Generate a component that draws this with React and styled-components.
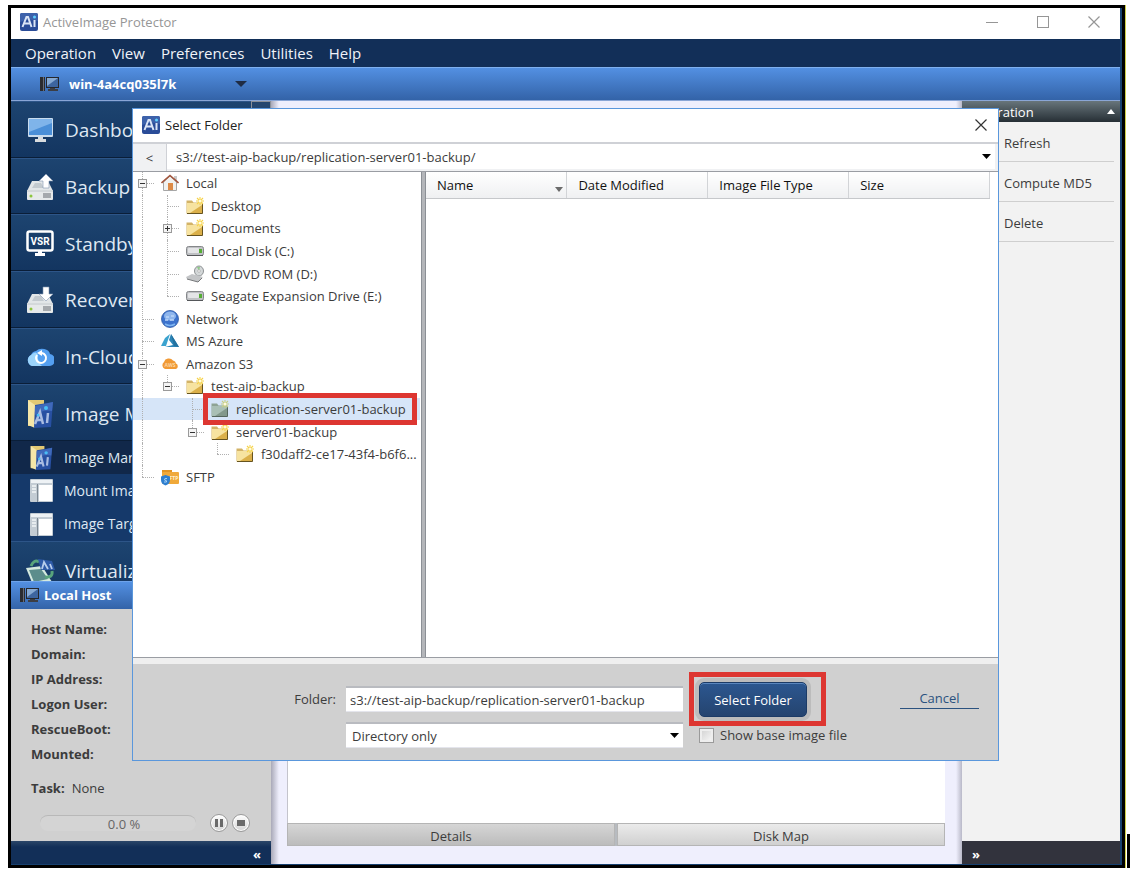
import React from 'react';
import styled, { createGlobalStyle, css } from 'styled-components';

const Color = {
  text: '#3c3c3c',
  navy: '#122f58',
  lavender: '#efeffd',
  grey: '#d0d0d0',
  red: '#dd3631',
  line: '#9a9da3',
  dialog: '#5a97dc',
};

const blueBar = 'linear-gradient(#5390e2, #3363a8)';

const GlobalStyle = createGlobalStyle`
  * {
    box-sizing: border-box;
  }

  body {
    margin: 0;
    background: #fff;
    color: ${Color.text};
    font-family: "Open Sans", "Noto Sans", sans-serif;
    font-size: 13px;
    line-height: 16px;
  }

  button, input, select {
    margin: 0;
    padding: 0;
    border: 0;
    border-radius: 0;
    background: none;
    color: inherit;
    font: inherit;
  }

  svg {
    display: block;
    flex: none;
  }
`;

/* ---------- icons ---------- */

const AppLogo = () => (
  <svg width="18" height="18" viewBox="0 0 18 18">
    <rect width="18" height="18" rx="2" fill="#2a4c98" />
    <path d="M0 9 Q9 5 18 8 V2 Q18 0 16 0 H2 Q0 0 0 2Z" fill="#3d62ab" />
    <path d="M2.5 14 L6.5 4 H8 L11.5 14 M4.5 10.5 H10" fill="none" stroke="#dbe5f6" strokeWidth="2" />
    <path d="M14.500 7 V14" stroke="#dbe5f6" strokeWidth="2" />
    <circle cx="14.500" cy="4" r="1.5" fill="#5fd0ff" />
  </svg>
);

const ComputerIcon = () => (
  <svg width="19" height="16" viewBox="0 0 19 16">
    <rect x="0" y="1" width="5" height="14" fill="#2b2c30" />
    <path d="M3.500 1 V15" stroke="#686d76" />
    <rect x="6" y="1" width="13" height="11" fill="#25272c" />
    <rect x="7" y="2" width="11" height="9" fill="#3d659f" />
    <path d="M7 2 H18 L7 10Z" fill="#86a9d2" />
    <path d="M10 12 H15 V13 H18 V15 H8 V13 H10Z" fill="#3c3e44" />
  </svg>
);

const MonitorIcon = () => (
  <svg width="27" height="26" viewBox="0 0 27 26">
    <rect x="1" y="1" width="25" height="19" rx="1" fill="#c9dcee" />
    <rect x="2" y="2" width="23" height="16" fill="#4a8fd8" />
    <path d="M2 2 H25 V6 L2 15Z" fill="#7fb4ea" />
    <path d="M11 20 H16 V22 H19 V25 H8 V22 H11Z" fill="#d9dcde" />
  </svg>
);

const DriveIcon = ({ down }) => (
  <svg width="28" height="28" viewBox="0 0 28 28">
    <path d="M6 8 H22 L27 18 H1Z" fill="#e2e6e8" />
    <path d="M9 10 H15 L18 15 H6Z" fill="#c3cacf" />
    <rect x="1" y="17" width="26" height="10" rx="1" fill="#e6e9ea" />
    <path d="M1 18 H27" stroke="#c2c8cc" />
    <rect x="17" y="20" width="8" height="5" fill="#a5a9ad" />
    <circle cx="5" cy="23" r="1.500" fill="#8cc63e" />
    <path d={down ? 'M17 1 H23 V8 H27 L20 15 L13 8 H17Z' : 'M20 1 L27 8 H23 V15 H17 V8 H13Z'} fill="#fff" stroke="#8294b0" strokeWidth="0.6" />
  </svg>
);

const StandbyIcon = () => (
  <svg width="28" height="27" viewBox="0 0 28 27">
    <rect x="1.500" y="1.500" width="25" height="19" rx="2" fill="none" stroke="#fff" strokeWidth="2.5" />
    <path d="M12 21 H16 V23 H19 V26 H9 V23 H12Z" fill="#fff" />
    <text x="14" y="15" textAnchor="middle" fontSize="10" fontWeight="700" fontFamily="Roboto, sans-serif" fill="#fff">VSR</text>
  </svg>
);

const CloudIcon = () => (
  <svg width="28" height="20" viewBox="0 0 28 20">
    <path d="M6 19 A6 6 0 0 1 5 8 A6 6 0 0 1 10 4 A8 6 0 0 1 24 7 A6 6 0 0 1 22 19Z" fill="#549ff0" />
    <path d="M6 19 A6 6 0 0 1 5 8 Q10 3 12 8 Q11 15 16 19Z" fill="#9bd4fb" />
    <path d="M11 8 A5 5 0 1 0 16 6" fill="none" stroke="#fff" strokeWidth="2" />
    <path d="M16 3 V9 L11 6Z" fill="#fff" />
  </svg>
);

const ImageFolderIcon = ({ size }) => (
  <svg width={size} height={size} viewBox="0 0 28 28">
    <path d="M2 0 H18 V6 H10 V26 H2Z" fill="#e3c974" />
    <path d="M2 0 L9 5 V28 L2 25Z" fill="#f5e6a8" />
    <path d="M9 5 L27 2 L25 27 L8 28Z" fill="#2850a2" />
    <path d="M9 6 L27 2 L26 11 Q17 9 9 15Z" fill="#3f69bb" />
    <path d="M9 24 L14 12 L17 24 M11 20 H16" fill="none" stroke="#a9bce2" strokeWidth="2.500" />
    <path d="M22 13 L21 23" stroke="#a9bce2" strokeWidth="2.500" />
    <circle cx="20" cy="8" r="2" fill="#49bdf5" />
    <circle cx="12" cy="15" r="1.500" fill="#49bdf5" />
  </svg>
);

const PaneIcon = () => (
  <svg width="23" height="23" viewBox="0 0 23 23">
    <rect width="23" height="23" rx="1" fill="#c3ccd4" />
    <rect x="1" y="1" width="21" height="3" fill="#eef2f5" />
    <rect x="9" y="6" width="13" height="16" fill="#fff" />
    <path d="M2 7 H6 M2 10 H6 M2 13 H6" stroke="#f4f6f8" strokeWidth="1.5" />
    <path d="M7.500 5 V23" stroke="#7d8892" />
  </svg>
);

const VirtualIcon = () => (
  <svg width="30" height="27" viewBox="0 0 30 27">
    <path d="M1 10 L17 8 L27 24 L8 27Z" fill="#d4e9df" />
    <path d="M4 12 L16 11 L23 21 L9 24Z" fill="#5c8d8c" />
    <path d="M6 8 Q9 1 14 4 M27 13 Q28 20 20 19" fill="none" stroke="#58a47c" strokeWidth="3" />
    <path d="M13 1 L27 3 L30 12 L16 12Z" fill="#2e5ba8" />
    <path d="M17 11 L19 4 L23 11 M25 6 L27 11" fill="none" stroke="#b7cdec" strokeWidth="1.8" />
  </svg>
);

const FolderIcon = ({ faded }) => (
  <svg width="18" height="18" viewBox="0 0 18 18">
    <path d="M0.500 3.500 H6 L7.500 5.500 H16.500 V16.500 H0.500Z" fill={faded ? '#8ea394' : '#d3b367'} />
    <path d="M1 6 H16 V16 H1Z" fill={faded ? '#a9bfb5' : '#f7e3a0'} />
    <path d="M16 8 V16 H4Z" fill={faded ? '#83998c' : '#dbb04a'} />
    <path d="M1 16.500 H16.500 V6" fill="none" stroke={faded ? '#56675e' : '#66531f'} />
    <path d="M14 0 V8 M10 4 H18 M11 1 L17 7 M17 1 L11 7" stroke={faded ? '#c9cf84' : '#f6d34a'} strokeWidth="1.1" />
    <circle cx="14" cy="4" r="1.5" fill="#fffbe0" />
  </svg>
);

const HomeIcon = () => (
  <svg width="18" height="18" viewBox="0 0 18 18">
    <rect x="13" y="2" width="3" height="5" fill="#c9c9c9" />
    <path d="M2.500 8 L9 2 L15.500 8 V16.500 H2.500Z" fill="#f1f1ef" stroke="#a6a6a6" />
    <rect x="7" y="9" width="5" height="7" fill="#dd8a46" />
    <path d="M0.500 9 L9 1.500 L17.500 9" fill="none" stroke="#a3553c" strokeWidth="1.6" />
  </svg>
);

const DiskIcon = () => (
  <svg width="18" height="18" viewBox="0 0 18 18">
    <rect x="0.500" y="4.500" width="17" height="9" rx="2" fill="#bfc1c4" stroke="#85878a" />
    <rect x="2" y="6" width="11" height="5" rx="1" fill="#e4e5e7" />
    <path d="M1 13.500 H17" stroke="#55575a" />
    <rect x="13" y="7" width="3" height="4" fill="#55ad35" />
  </svg>
);

const DiscIcon = () => (
  <svg width="18" height="18" viewBox="0 0 18 18">
    <ellipse cx="13" cy="6" rx="4.500" ry="5" fill="#d4d8d9" stroke="#8d9193" />
    <path d="M13 6 L11 2 H14Z" fill="#8ecb87" />
    <circle cx="13" cy="6" r="1.3" fill="#fff" stroke="#999" strokeWidth="0.6" />
    <path d="M0 12 L6 9 L17 12 L12 17 L1 14Z" fill="#c3c5c7" />
    <path d="M1 14 L12 17 L16 13" fill="none" stroke="#77797b" />
  </svg>
);

const GlobeIcon = () => (
  <svg width="18" height="18" viewBox="0 0 18 18">
    <circle cx="9" cy="9" r="8.500" fill="#3d73cd" stroke="#2d5aa6" strokeWidth="0.8" />
    <ellipse cx="9" cy="6" rx="6" ry="4.500" fill="#8fb6ec" />
    <path d="M5 7 H8 M10 6 H13 M4 10 H7 M9 10 H13" stroke="#bcd6f7" strokeWidth="1.5" />
    <path d="M4 14 Q9 17 14 14" fill="none" stroke="#7fb6f2" strokeWidth="1.5" />
  </svg>
);

const AzureIcon = () => (
  <svg width="18" height="18" viewBox="0 0 18 18">
    <path d="M9 2 L4 6 L0 14 H5Z" fill="#3ba3cf" />
    <path d="M10 2 L18 15 H4 L12 13 L8 8Z" fill="#2c86b8" />
    <path d="M10 2 L13 14 L18 15Z" fill="#23719f" />
  </svg>
);

const AwsIcon = () => (
  <svg width="18" height="18" viewBox="0 0 18 18">
    <path d="M4 14 A4 4 0 0 1 3 7 A5 4.500 0 0 1 12 5.500 A3.500 3.500 0 0 1 15 8.500 A3 3 0 0 1 15 14Z" fill="#f19a35" />
    <text x="9" y="12" textAnchor="middle" fontSize="5" fontWeight="700" fill="#fbd5a4">AWS</text>
  </svg>
);

const SftpIcon = () => (
  <svg width="18" height="18" viewBox="0 0 18 18">
    <path d="M1 2 H11 V5 H1Z" fill="#e29422" />
    <rect x="1" y="4" width="17" height="12" rx="1" fill="#f0a93a" />
    <text x="13" y="12" textAnchor="middle" fontSize="5" fontWeight="700" fill="#fff0cf">FTP</text>
    <path d="M4.500 7 L9 8.500 V12 Q9 16 4.500 17.500 Q0 16 0 12 V8.500Z" fill="#2e7fd0" />
    <path d="M6 10.500 Q3 10 3.500 12 Q6.500 12.500 5.500 14 L3 14" fill="none" stroke="#a9d3f5" />
  </svg>
);

const CrossIcon = () => (
  <svg width="12" height="12" viewBox="0 0 12 12">
    <path d="M0.500 0.500 L11.500 11.500 M11.500 0.500 L0.500 11.500" stroke="currentColor" strokeWidth="1.2" />
  </svg>
);

const Triangle = ({ up, width = 9 }) => (
  <svg width={width} height={width > 9 ? 6 : 5} viewBox="0 0 10 6" preserveAspectRatio="none">
    <path d={up ? 'M0 6 L5 0 L10 6Z' : 'M0 0 L5 6 L10 0Z'} fill="currentColor" />
  </svg>
);

/* ---------- window ---------- */

const Page = styled.div`
  position: relative;
  display: flex;
  gap: 2px;
  min-height: 100vh;
  padding: 5px 0 6px 8px;
`;

const Window = styled.div`
  display: flex;
  flex: 1;
  flex-direction: column;
  min-width: 0;
  padding: 0 2px 1px 0;
  border: 3px solid #000;
  background: #17406f;
  box-shadow: 1px 0 0 #cfcf4a;
`;

const TextCursor = styled.div`
  align-self: flex-end;
  width: 3px;
  height: 34px;
  background: #000;
`;

const TitleBar = styled.header`
  display: flex;
  align-items: center;
  height: 31px;
  padding: 0 1px 4px 9px;
  gap: 5px;
  background: #fff;
  color: #969696;
`;

const WindowTitle = styled.span`
  flex: 1;
`;

const ControlGroup = styled.div`
  display: flex;
`;

const WindowButton = styled.button`
  display: flex;
  align-items: center;
  justify-content: center;
  width: 51px;
  height: 27px;
`;

const MenuBar = styled.nav`
  display: flex;
  align-items: center;
  height: 28px;
  padding-left: 14px;
  gap: 16px;
  background: ${Color.navy};
  color: #f0f3f8;
  font-size: 15px;
  line-height: 20px;
`;

const HostBar = styled.div`
  display: flex;
  align-items: center;
  height: 34px;
  padding-left: 29px;
  gap: 10px;
  border-top: 1px solid #7fb0ef;
  border-bottom: 1px solid #8aa6d6;
  background: ${blueBar};
  color: #fff;
`;

const SelectBox = styled.div`
  position: relative;
  display: flex;
  align-items: center;

  select {
    width: 100%;
    height: 100%;
    appearance: none;
    outline: none;
  }

  svg {
    position: absolute;
    right: 4px;
    color: #000;
    pointer-events: none;
  }
`;

const HostSelect = styled(SelectBox)`
  width: 182px;
  height: 24px;
  font-weight: 700;

  option {
    color: ${Color.text};
  }

  svg {
    color: #1f2c44;
  }
`;

const Body = styled.div`
  display: grid;
  flex: 1;
  grid-template-columns: 260px 1fr 158px;
`;

/* ---------- sidebar ---------- */

const Sidebar = styled.aside`
  display: flex;
  flex-direction: column;
`;

const NavArea = styled.div`
  display: flex;
  flex: 1 0 480px;
  height: 480px;
  overflow: hidden;
  background: #15396a;
  color: #dfe8f2;
`;

const NavList = styled.nav`
  flex: 1;
`;

const ScrollGutter = styled.div`
  width: 20px;
  border: 1px solid #8b9099;
  border-width: 1px 1px 0;
  background: #24466f;
`;

const NavGroup = styled.div`
  display: grid;
  grid-auto-rows: 1fr;
  height: ${(props) => props.$height}px;
`;

const NavItem = styled.button`
  display: flex;
  align-items: center;
  width: 100%;
  padding: 2px 0 0 14px;
  gap: 10px;
  border-top: 1px solid #2d5588;
  border-bottom: 1px solid #0a1e38;
  background: linear-gradient(#1d4470, #133560);
  font-size: 19px;
  line-height: 24px;
  text-align: left;
  white-space: nowrap;
`;

const IconSlot = styled.span`
  display: flex;
  justify-content: center;
  width: 30px;
`;

const SubItem = styled.button`
  display: flex;
  align-items: center;
  width: 100%;
  padding-left: 15px;
  gap: 8px;
  font-size: 14px;
  text-align: left;

  ${(props) => props.$active
    && css`
      background: #11284a;
    `};
`;

const LocalHostBar = styled.h2`
  display: flex;
  align-items: center;
  height: 28px;
  margin: 0;
  padding: 0 0 2px 9px;
  gap: 5px;
  border-top: 1px solid #6ea3ea;
  background: ${blueBar};
  color: #fff;
  font-size: 13px;
`;

const HostInfo = styled.section`
  height: 232px;
  padding: 8px 20px 0;
  background: ${Color.grey};
`;

const InfoList = styled.dl`
  margin: 0;
`;

const InfoRow = styled.div`
  display: flex;
  gap: 7px;
  line-height: 25px;

  &:last-child {
    margin-top: 9px;
  }

  dt {
    font-weight: 700;
  }

  dd {
    margin: 0;
  }
`;

const TaskBar = styled.div`
  display: flex;
  align-items: center;
  height: 24px;
  margin-top: 10px;
  padding-left: 9px;
  gap: 4px;
`;

const Progress = styled.div`
  flex: 1;
  height: 16px;
  margin-right: 10px;
  border-top: 1px solid #b8b8b8;
  border-radius: 8px;
  background: #d4d4d4;
  color: #666;
  padding-left: 12px;
  text-align: center;
`;

const RoundButton = styled.button`
  display: flex;
  align-items: center;
  justify-content: center;
  width: 18px;
  height: 18px;
  border: 1px solid #9a9a9a;
  border-radius: 50%;
  background: linear-gradient(#fff, #d4d4d4);
  box-shadow: inset 0 0 0 1px #fff;
  color: #6a6a6a;

  &:last-child {
    margin-right: 1px;
  }
`;

const SidebarFooter = styled.div`
  display: flex;
  align-items: center;
  justify-content: flex-end;
  height: 23px;
  padding: 3px 10px 0;
  background: linear-gradient(#2b4668, ${Color.navy} 6px);
  color: #fff;
  font-weight: 700;
`;

/* ---------- centre and right panel ---------- */

const Main = styled.main`
  display: flex;
  flex-direction: column;
  padding: 0 17px 18px 16px;
  background: linear-gradient(90deg, #a9a9b8, ${Color.lavender} 8px, ${Color.lavender} calc(100% - 6px), #b9b9c8);
`;

const DetailPane = styled.div`
  flex: 1;
  margin-top: 7px;
  border-left: 1px solid #c4c4cc;
  background: #fff;
`;

const TabRow = styled.div`
  display: grid;
  grid-template-columns: 1fr 1fr;
  gap: 2px;
  height: 23px;
  background: #b7bbc0;
`;

const Tab = styled.button`
  padding-top: 2px;
  border: 1px solid #b5b5b5;
  background: ${(props) => (props.$active
    ? 'linear-gradient(#d6d6d6, #bcbcbc)'
    : 'linear-gradient(#ebebeb, #d0d0d0)')};
`;

const OperationPanel = styled.aside`
  display: flex;
  flex-direction: column;
  background: #f2f2f2;
`;

const PanelHeader = styled.h2`
  display: flex;
  align-items: center;
  justify-content: space-between;
  height: 21px;
  margin: 0;
  padding: 0 5px 0 10px;
  background: linear-gradient(#68757b, #262f35);
  color: #fff;
  font-size: 13px;
  font-weight: 400;
`;

const PanelActions = styled.div`
  flex: 1;
  padding-right: 6px;
`;

const PanelAction = styled.button`
  display: block;
  width: 100%;
  height: 40px;
  padding: 2px 0 0 42px;
  border-bottom: 1px solid #cfcfcf;
  text-align: left;
`;

const PanelFooter = styled.div`
  display: flex;
  align-items: center;
  height: 23px;
  padding: 3px 10px 0;
  background: #32333d;
  color: #fff;
  font-weight: 700;
`;

/* ---------- dialog ---------- */

const Dialog = styled.section`
  position: absolute;
  top: 108px;
  right: 131px;
  left: 132px;
  border: 1px solid ${Color.dialog};
  background: #fff;
`;

const DialogTitle = styled.header`
  display: flex;
  align-items: center;
  height: 33px;
  padding: 0 11px 1px 9px;
  gap: 5px;
  color: #222;
`;

const CloseButton = styled.button`
  color: #333;
`;

const PathBar = styled.div`
  display: flex;
  height: 30px;
  border-top: 2px solid #cfd1d6;
  border-bottom: 1px solid ${Color.line};
  background: #f0f1f3;
`;

const BackButton = styled.button`
  width: 34px;
  border-right: 1px solid #cfd1d6;
`;

const PathSelect = styled(SelectBox)`
  flex: 1;
  margin: 0 3px 2px 0;
  background: #fff;

  select {
    padding-left: 9px;
  }
`;

const Panes = styled.div`
  display: grid;
  grid-template-columns: 292px 1fr;
  height: 486px;
  border-bottom: 1px solid ${Color.line};
`;

const Tree = styled.div`
  display: grid;
  grid-template-columns: minmax(0, 1fr);
  grid-template-rows: repeat(14, 1fr);
  height: 316px;
`;

const TreeRow = styled.div`
  display: flex;
  margin-right: 5px;
  background: ${(props) => (props.$selected ? '#d6e5f8' : 'none')};
`;

const Guide = styled.span`
  position: relative;
  flex: none;
  width: 25px;

  ${(props) => props.$kind !== 'blank'
    && css`
      &::before {
        content: '';
        position: absolute;
        top: 0;
        left: 9px;
        height: ${props.$kind === 'end' ? '50%' : '100%'};
        border-left: 1px dotted #b0b0b0;
      }
    `};

  ${(props) => (props.$kind === 'end' || props.$kind === 'tee')
    && css`
      &::after {
        content: '';
        position: absolute;
        top: 50%;
        left: 9px;
        width: 12px;
        border-top: 1px dotted #b0b0b0;
      }
    `};
`;

const Expander = styled.button`
  position: absolute;
  z-index: 1;
  top: calc(50% - 4px);
  left: 5px;
  display: flex;
  align-items: center;
  justify-content: center;
  width: 9px;
  height: 9px;
  border: 1px solid #9a9a9a;
  background: #f4f4f4;
`;

const TreeLabel = styled.span`
  display: flex;
  flex: 1;
  align-items: center;
  min-width: 0;
  margin-right: 8px;
  padding-left: 3px;
  gap: 7px;
  white-space: nowrap;

  ${(props) => props.$marked
    && css`
      z-index: 2;
      outline: 5px solid ${Color.red};
    `};
`;

const FileList = styled.div`
  border-left: 1px solid #8c9096;
  box-shadow: -3px 0 0 #b4b6ba, -4px 0 0 #8c9096;
`;

const FileTable = styled.table`
  width: calc(100% - 8px);
  border-collapse: collapse;
  table-layout: fixed;

  th {
    height: 26px;
    padding: 1px 11px 0;
    border-right: 1px solid #d2d4d7;
    border-bottom: 1px solid #c6c8cb;
    background: linear-gradient(#fff, #eff0f2);
    color: #111;
    font-weight: 400;
    text-align: left;
  }
`;

const HeaderCell = styled.span`
  display: flex;
  align-items: center;
  justify-content: space-between;
  margin-right: -8px;

  svg {
    margin-top: 8px;
    color: #6b6b6b;
  }
`;

const DialogForm = styled.form`
  display: grid;
  grid-template-columns: minmax(60px, 203px) minmax(160px, 337px) 1fr 79px;
  grid-template-rows: 34px 26px;
  align-items: center;
  column-gap: 10px;
  row-gap: 6px;
  height: 102px;
  padding: 18px 19px 0 0;
  border-top: 6px solid #efefef;
  background: ${Color.grey};
`;

const FieldLabel = styled.label`
  text-align: right;
`;

const field = css`
  height: 26px;
  border-top: 2px solid #b9bbc0;
  border-bottom: 1px solid #e4e5ec;
  background: #fff;
`;

const FolderInput = styled.input`
  ${field}
  width: 100%;
  padding-left: 4px;
  outline: none;
`;

const TypeSelect = styled(SelectBox)`
  ${field}
  grid-column: 2;

  select {
    padding-left: 6px;
  }
`;

const ButtonMark = styled.div`
  justify-self: start;
  margin-left: 1px;
  padding: 5px 14px 4px 5px;
  outline: 5px solid ${Color.red};
`;

const PrimaryButton = styled.button`
  display: block;
  width: 108px;
  height: 35px;
  border: 1px solid #1c3b66;
  border-radius: 5px;
  background: linear-gradient(#2c5790, #25446f);
  box-shadow: 0 0 0 4px #bcbcbc, inset 0 1px 0 #5a86be;
  color: #fff;
`;

const CancelLink = styled.a`
  height: 20px;
  padding-top: 1px;
  border-bottom: 1px solid #2b527f;
  color: #2b527f;
  text-align: center;
  text-decoration: none;
`;

const CheckLabel = styled.label`
  display: flex;
  align-items: center;
  margin-left: 6px;
  gap: 6px;
  white-space: nowrap;

  input {
    width: 15px;
    height: 15px;
    border: 1px solid #9a9a9a;
    appearance: none;
    background: linear-gradient(135deg, #cfcfcf, #fafafa);
    box-shadow: inset 0 0 0 2px #eee;
  }
`;

/* ---------- data ---------- */

const menus = ['Operation', 'View', 'Preferences', 'Utilities', 'Help'];

const navItems = [
  { label: 'Dashboard', icon: <MonitorIcon /> },
  { label: 'Backup', icon: <DriveIcon /> },
  { label: 'Standby VM', icon: <StandbyIcon /> },
  { label: 'Recovery', icon: <DriveIcon down /> },
  { label: 'In-Cloud', icon: <CloudIcon /> },
  { label: 'Image Manager', icon: <ImageFolderIcon size={28} /> },
];

const subItems = [
  { label: 'Image Manager', icon: <ImageFolderIcon size={24} />, active: true },
  { label: 'Mount Image', icon: <PaneIcon /> },
  { label: 'Image Target', icon: <PaneIcon /> },
];

const hostFields = ['Host Name:', 'Domain:', 'IP Address:', 'Logon User:', 'RescueBoot:', 'Mounted:'];

const treeRows = [
  { label: 'Local', icon: <HomeIcon />, guides: ['tee'], toggle: 'minus' },
  { label: 'Desktop', icon: <FolderIcon />, guides: ['line', 'tee'] },
  { label: 'Documents', icon: <FolderIcon />, guides: ['line', 'tee'], toggle: 'plus' },
  { label: 'Local Disk (C:)', icon: <DiskIcon />, guides: ['line', 'tee'] },
  { label: 'CD/DVD ROM (D:)', icon: <DiscIcon />, guides: ['line', 'tee'] },
  { label: 'Seagate Expansion Drive (E:)', icon: <DiskIcon />, guides: ['line', 'end'] },
  { label: 'Network', icon: <GlobeIcon />, guides: ['tee'] },
  { label: 'MS Azure', icon: <AzureIcon />, guides: ['tee'] },
  { label: 'Amazon S3', icon: <AwsIcon />, guides: ['tee'], toggle: 'minus' },
  { label: 'test-aip-backup', icon: <FolderIcon />, guides: ['line', 'end'], toggle: 'minus' },
  {
    label: 'replication-server01-backup', icon: <FolderIcon faded />, guides: ['line', 'blank', 'tee'], selected: true,
  },
  { label: 'server01-backup', icon: <FolderIcon />, guides: ['line', 'blank', 'end'], toggle: 'minus' },
  { label: 'f30daff2-ce17-43f4-b6f6...', icon: <FolderIcon />, guides: ['line', 'blank', 'blank', 'end'] },
  { label: 'SFTP', icon: <SftpIcon />, guides: ['end'] },
];

/* ---------- parts ---------- */

const TreeToggle = ({ kind, name }) => (
  <Expander type="button" aria-label={`Toggle ${name}`}>
    <svg width="5" height="5" viewBox="0 0 5 5">
      <path d={kind === 'plus' ? 'M0 2.5 H5 M2.5 0 V5' : 'M0 2.5 H5'} stroke="#333" />
    </svg>
  </Expander>
);

const FolderTree = () => (
  <Tree role="tree">
    {treeRows.map((row) => (
      <TreeRow key={row.label} role="treeitem" $selected={row.selected}>
        {row.guides.map((kind, i) => (
          // eslint-disable-next-line react/no-array-index-key
          <Guide key={i} $kind={kind}>
            {row.toggle && i === row.guides.length - 1
              && <TreeToggle kind={row.toggle} name={row.label} />}
          </Guide>
        ))}
        <TreeLabel $marked={row.selected}>
          {row.icon}
          {row.label}
        </TreeLabel>
      </TreeRow>
    ))}
  </Tree>
);

const SelectFolderDialog = () => (
  <Dialog role="dialog" aria-label="Select Folder">
    <DialogTitle>
      <AppLogo />
      <WindowTitle>Select Folder</WindowTitle>
      <CloseButton type="button" aria-label="Close dialog"><CrossIcon /></CloseButton>
    </DialogTitle>
    <PathBar>
      <BackButton type="button">&lt;</BackButton>
      <PathSelect>
        <select aria-label="Path">
          <option>s3://test-aip-backup/replication-server01-backup/</option>
        </select>
        <Triangle />
      </PathSelect>
    </PathBar>
    <Panes>
      <FolderTree />
      <FileList>
        <FileTable>
          <thead>
            <tr>
              <th>
                <HeaderCell>
                  Name
                  <Triangle width={8} />
                </HeaderCell>
              </th>
              <th>Date Modified</th>
              <th>Image File Type</th>
              <th>Size</th>
            </tr>
          </thead>
        </FileTable>
      </FileList>
    </Panes>
    <DialogForm>
      <FieldLabel htmlFor="folder">Folder:</FieldLabel>
      <FolderInput id="folder" defaultValue="s3://test-aip-backup/replication-server01-backup" />
      <ButtonMark>
        <PrimaryButton type="button">Select Folder</PrimaryButton>
      </ButtonMark>
      <CancelLink href="#cancel">Cancel</CancelLink>
      <TypeSelect>
        <select aria-label="File type">
          <option>Directory only</option>
        </select>
        <Triangle />
      </TypeSelect>
      <CheckLabel>
        <input type="checkbox" />
        Show base image file
      </CheckLabel>
    </DialogForm>
  </Dialog>
);

const HostSidebar = () => (
  <Sidebar>
    <NavArea>
      <NavList>
        <NavGroup $height={340}>
          {navItems.map((item) => (
            <NavItem key={item.label} type="button">
              <IconSlot>{item.icon}</IconSlot>
              {item.label}
            </NavItem>
          ))}
        </NavGroup>
        <NavGroup $height={100}>
          {subItems.map((item) => (
            <SubItem key={item.label} type="button" $active={item.active}>
              <IconSlot>{item.icon}</IconSlot>
              {item.label}
            </SubItem>
          ))}
        </NavGroup>
        <NavGroup $height={58}>
          <NavItem type="button">
            <IconSlot><VirtualIcon /></IconSlot>
            Virtualization
          </NavItem>
        </NavGroup>
      </NavList>
      <ScrollGutter />
    </NavArea>
    <LocalHostBar>
      <ComputerIcon />
      Local Host
    </LocalHostBar>
    <HostInfo>
      <InfoList>
        {hostFields.map((name) => (
          <InfoRow key={name}><dt>{name}</dt></InfoRow>
        ))}
        <InfoRow>
          <dt>Task:</dt>
          <dd>None</dd>
        </InfoRow>
      </InfoList>
      <TaskBar>
        <Progress>0.0 %</Progress>
        <RoundButton type="button" aria-label="Pause">
          <svg width="8" height="8" viewBox="0 0 8 8"><path d="M0 0 H3 V8 H0Z M5 0 H8 V8 H5Z" fill="currentColor" /></svg>
        </RoundButton>
        <RoundButton type="button" aria-label="Stop">
          <svg width="8" height="8" viewBox="0 0 8 8"><rect y="1" width="8" height="6" fill="currentColor" /></svg>
        </RoundButton>
      </TaskBar>
    </HostInfo>
    <SidebarFooter>«</SidebarFooter>
  </Sidebar>
);

const WindowControls = () => (
  <ControlGroup>
    <WindowButton type="button" aria-label="Minimize">
      <svg width="12" height="12" viewBox="0 0 12 12"><path d="M0 6.500 H12" stroke="currentColor" /></svg>
    </WindowButton>
    <WindowButton type="button" aria-label="Maximize">
      <svg width="12" height="12" viewBox="0 0 12 12"><rect x="0.500" y="0.500" width="11" height="11" fill="none" stroke="currentColor" /></svg>
    </WindowButton>
    <WindowButton type="button" aria-label="Close"><CrossIcon /></WindowButton>
  </ControlGroup>
);

const App = () => (
  <Page>
    <GlobalStyle />
    <Window>
      <TitleBar>
        <AppLogo />
        <WindowTitle>ActiveImage Protector</WindowTitle>
        <WindowControls />
      </TitleBar>
      <MenuBar>
        {menus.map((name) => <button key={name} type="button">{name}</button>)}
      </MenuBar>
      <HostBar>
        <ComputerIcon />
        <HostSelect>
          <select aria-label="Host">
            <option>win-4a4cq035l7k</option>
          </select>
          <Triangle width={12} />
        </HostSelect>
      </HostBar>
      <Body>
        <HostSidebar />
        <Main>
          <DetailPane />
          <TabRow>
            <Tab type="button" $active>Details</Tab>
            <Tab type="button">Disk Map</Tab>
          </TabRow>
        </Main>
        <OperationPanel>
          <PanelHeader>
            Operation
            <Triangle up width={8} />
          </PanelHeader>
          <PanelActions>
            {['Refresh', 'Compute MD5', 'Delete'].map((name) => (
              <PanelAction key={name} type="button">{name}</PanelAction>
            ))}
          </PanelActions>
          <PanelFooter>»</PanelFooter>
        </OperationPanel>
      </Body>
    </Window>
    <TextCursor />
    <SelectFolderDialog />
  </Page>
);

export default App;
